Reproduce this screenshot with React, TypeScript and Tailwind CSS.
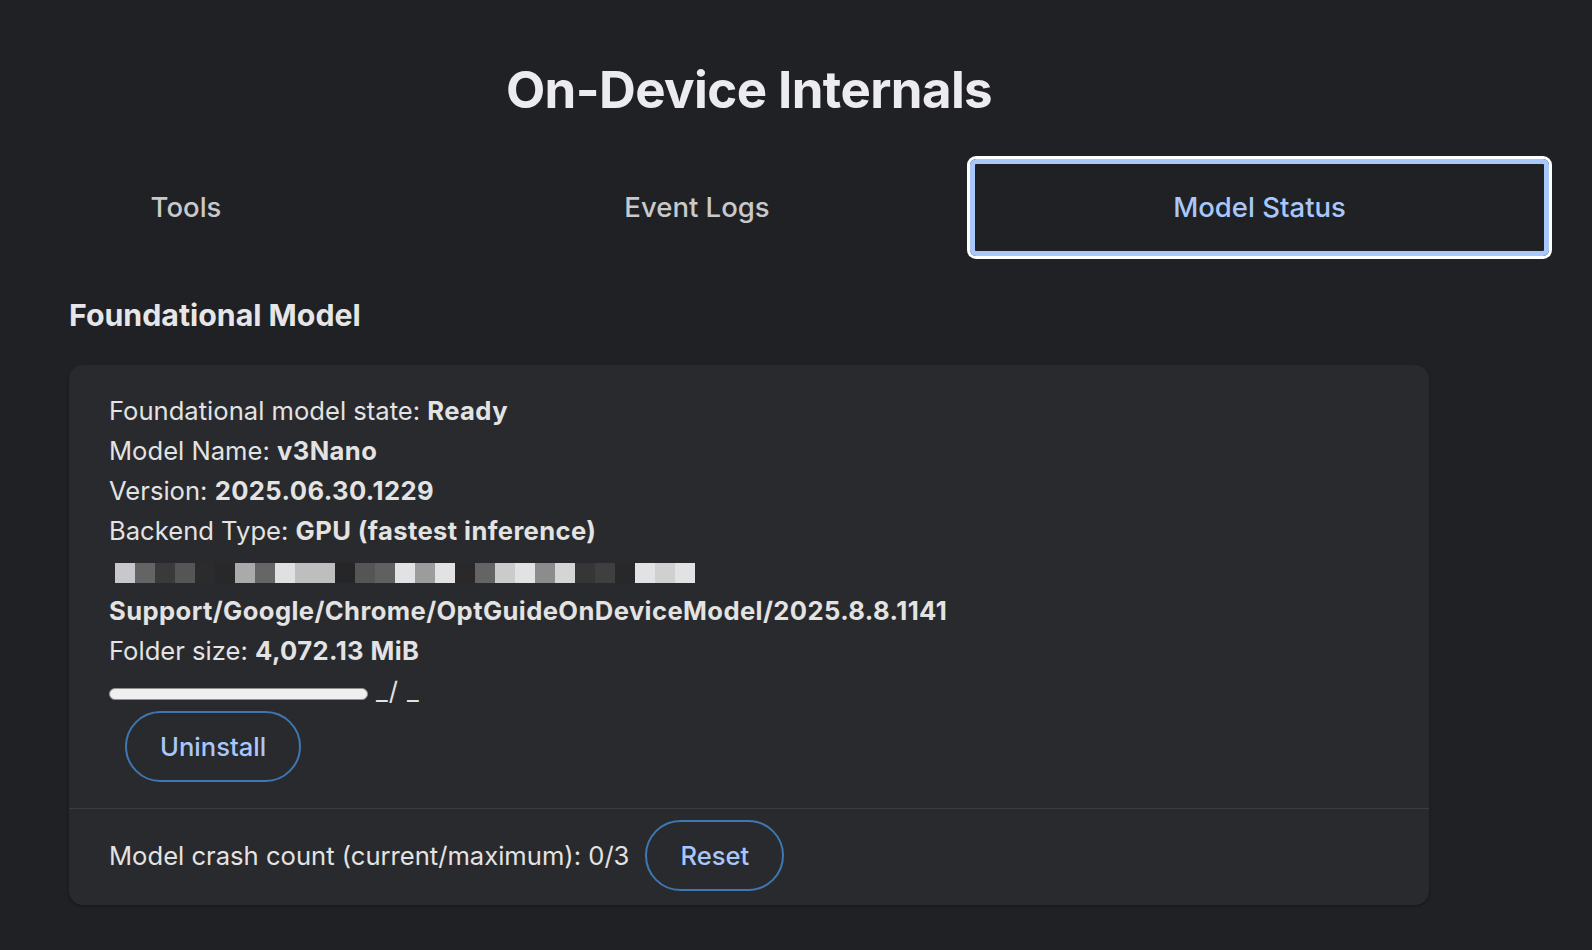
import React from "react";

const mosaic: string[] = [
  "#c8c8cc", "#646464", "#3a3a3a", "#555555", "#2b2b2e", "#28282b",
  "#aaaaaa", "#666666", "#e0e0e2", "#bebebe", "#bebebe", "#262628",
  "#555555", "#606060", "#e2e2e4", "#9c9c9c", "#e2e2e4", "#2a2829",
  "#646464", "#cbcbcb", "#e2e2e4", "#8c8c8c", "#d5d5d5", "#363636",
  "#3f3f3f", "#28282b", "#e2e2e4", "#d0d0d0", "#e2e2e4",
];

function Line({ label, value }: { label?: string; value?: string }) {
  return (
    <div className="h-[40px] leading-[40px] whitespace-nowrap">
      {label && <span>{label} </span>}
      {value && <span className="font-bold tracking-[0.4px]">{value}</span>}
    </div>
  );
}

function PillButton({ children }: { children: React.ReactNode }) {
  return (
    <button className="h-[71px] px-[33px] rounded-full border-2 border-[#3f77b0] text-[#a8c7fa] font-medium text-[25.6px] leading-none">
      {children}
    </button>
  );
}

export default function App() {
  return (
    <div
      className="min-h-screen w-full bg-[#202124] text-[#e3e3e3]"
      style={{ fontFamily: "Inter, 'Noto Sans', sans-serif" }}
    >
      <div className="pl-[69px] pr-[163px] pt-[64px]">
        <h1 className="text-center text-[51px] leading-none font-bold tracking-[-0.6px] text-[#ececf0]">
          On-Device Internals
        </h1>
      </div>

      {/* tab strip */}
      <div className="flex mt-[44px] pl-[40px] text-[27.5px] font-medium">
        <div className="w-[292px] h-[97px] flex items-center justify-center text-[#c9c9cb]">
          Tools
        </div>
        <div className="ml-[94px] w-[542px] h-[97px] flex items-center justify-center text-[#c9c9cb]">
          Event Logs
        </div>
        <div className="ml-[2px] w-[579px] h-[97px] flex items-center justify-center rounded-[6px] border-[5px] border-[#a8c7fa] ring-[3px] ring-white text-[#a8c7fa]">
          Model Status
        </div>
      </div>

      <div className="pl-[69px] pr-[163px]">
        <h2 className="mt-[44px] text-[30.3px] leading-none font-bold text-[#e6e6e8]">
          Foundational Model
        </h2>

        <div className="mt-[35px] rounded-[14px] bg-[#292a2d] shadow-[0_1px_3px_rgba(0,0,0,0.35)] text-[25.6px]">
          <div className="px-[40px] pt-[26px] pb-[26px]">
            <Line label="Foundational model state:" value="Ready" />
            <Line label="Model Name:" value="v3Nano" />
            <Line label="Version:" value="2025.06.30.1229" />
            <Line label="Backend Type:" value="GPU (fastest inference)" />
            <div className="h-[40px] flex items-start pt-[12px] pl-[6px]">
              {mosaic.map((c, i) => (
                <div key={i} className="w-[20px] h-[20px]" style={{ backgroundColor: c }} />
              ))}
            </div>
            <Line value="Support/Google/Chrome/OptGuideOnDeviceModel/2025.8.8.1141" />
            <Line label="Folder size:" value="4,072.13 MiB" />
            <div className="h-[40px] leading-[40px] whitespace-nowrap">
              <span className="inline-block w-[259px] h-[12px] mr-[8px] rounded-full bg-[#efefef] border border-[#8f8f8f]" />
              <span className="tracking-[1px]">_/ _</span>
            </div>
            <div className="ml-[16px]">
              <PillButton>Uninstall</PillButton>
            </div>
          </div>
          <div className="h-px bg-[#3c3d41]" />
          <div className="px-[40px] pt-[11px] pb-[14px] flex items-center gap-[16px]">
            <span>Model crash count (current/maximum): 0/3</span>
            <PillButton>Reset</PillButton>
          </div>
        </div>
      </div>
    </div>
  );
}
